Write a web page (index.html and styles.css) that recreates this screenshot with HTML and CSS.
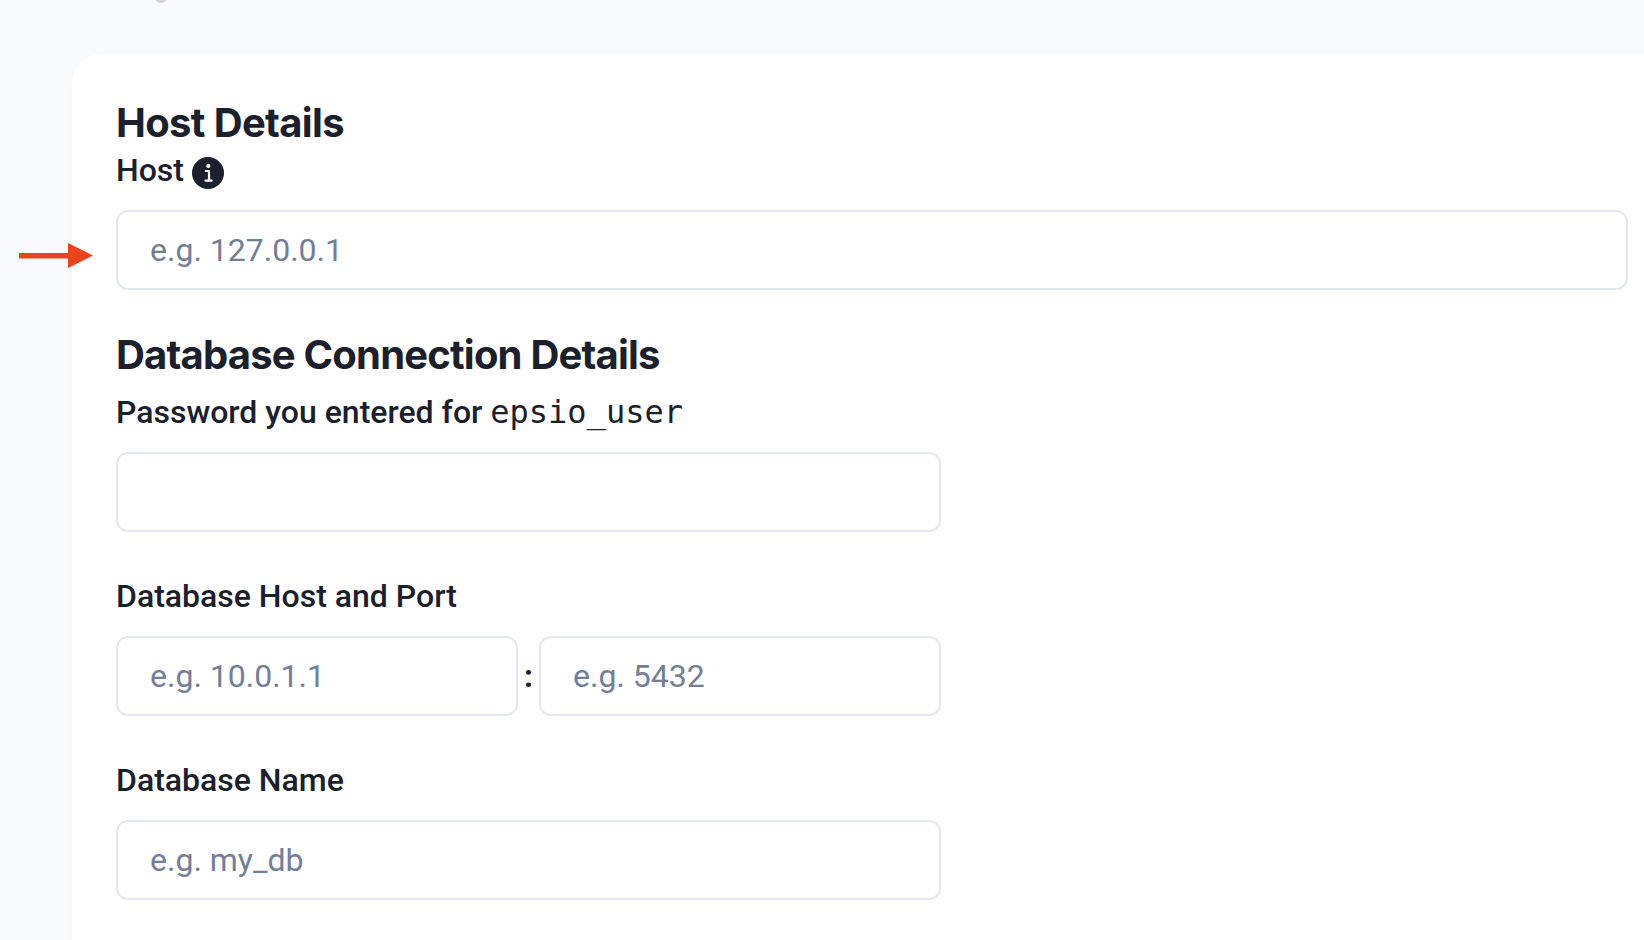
FILE: index.html
```
<!DOCTYPE html>
<html lang="en">
<head>
<meta charset="utf-8">
<title>Host Details</title>
<link rel="stylesheet" href="styles.css">
</head>
<body>
<main class="page">
  <span class="step-dot"></span>
  <form class="card">
    <section class="section">
      <h2 class="heading">Host Details</h2>
      <div class="field">
        <label class="label" for="host">Host
          <svg class="info" viewBox="0 0 32 32" aria-hidden="true">
            <circle cx="16" cy="16" r="16" fill="#1a202c"/>
            <circle cx="16.3" cy="8.9" r="2.1" fill="#fff"/>
            <path d="M13.8 14H17v9.4M13.4 23.6h6.3" fill="none" stroke="#fff" stroke-width="2.2" stroke-linecap="round" stroke-linejoin="round"/>
          </svg>
        </label>
        <input class="input" id="host" placeholder="e.g. 127.0.0.1">
        <svg class="arrow" viewBox="0 0 74 25" aria-hidden="true">
          <path d="M0 10h49V0l25 12.500L49 25V15.500H0z" fill="#ea431d"/>
        </svg>
      </div>
    </section>
    <section class="section">
      <h2 class="heading heading-spaced">Database Connection Details</h2>
      <div class="field half">
        <label class="label" for="password">Password you entered for <code class="code">epsio_user</code></label>
        <input class="input" id="password" type="password">
      </div>
      <div class="field half">
        <label class="label" for="db-host">Database Host and Port</label>
        <div class="pair">
          <input class="input" id="db-host" placeholder="e.g. 10.0.1.1">
          <span class="colon">:</span>
          <input class="input" placeholder="e.g. 5432" aria-label="Port">
        </div>
      </div>
      <div class="field half">
        <label class="label" for="db-name">Database Name</label>
        <input class="input" id="db-name" placeholder="e.g. my_db">
      </div>
    </section>
  </form>
</main>
</body>
</html>
```
FILE: styles.css
```
* {
  box-sizing: border-box;
}

body {
  margin: 0;
  background: #f9fafc;
  color: #1a202c;
  font-family: Roboto, sans-serif;
  font-size: 32px;
  line-height: 48px;
}

.page {
  position: relative;
  height: 940px;
  padding: 54px 0 0 72px;
  overflow: hidden;
}

.step-dot {
  position: absolute;
  top: -9px;
  left: 155px;
  width: 12px;
  height: 12px;
  border-radius: 50%;
  background: #cbd5e0;
}

.card {
  display: flex;
  flex-direction: column;
  gap: 40px;
  width: 1600px;
  min-height: 920px;
  padding: 44px;
  border-radius: 30px;
  background: #fff;
  box-shadow: 0 8px 12px rgba(0, 0, 0, 0.012);
}

.section {
  display: flex;
  flex-direction: column;
}

.heading {
  height: 48px;
  margin: 0;
  padding-top: 1px;
  font-family: Inter, sans-serif;
  font-size: 40px;
  font-weight: 700;
  line-height: 48px;
  letter-spacing: -0.65px;
}

.heading-spaced {
  margin-bottom: 10px;
  letter-spacing: -0.8px;
}

.field {
  position: relative;
  display: flex;
  flex-direction: column;
  gap: 16px;
}

.field + .field {
  margin-top: 40px;
}

.half {
  width: 825px;
}

.label {
  display: flex;
  align-items: center;
  height: 48px;
  font-weight: 500;
  white-space: pre;
}

.info {
  width: 32px;
  height: 32px;
  margin: 6px 0 0 8px;
}

.label:has(.info) {
  white-space: normal;
}

.code {
  font-family: "DejaVu Sans Mono", monospace;
  font-size: 32px;
  font-weight: 400;
}

.input {
  width: 100%;
  min-width: 0;
  height: 80px;
  padding: 0 32px;
  border: 2px solid #e2e8f0;
  border-radius: 12px;
  background: #fff;
  color: inherit;
  font: inherit;
}

.input::placeholder {
  color: #718096;
  opacity: 1;
}

.pair {
  display: flex;
  align-items: center;
}

.pair .input {
  flex: 1;
}

.colon {
  width: 21px;
  text-align: center;
  font-weight: 700;
}

#host {
  width: 1512px;
}

.arrow {
  position: absolute;
  left: -97.5px;
  top: 97px;
  width: 74px;
  height: 25px;
}
```
